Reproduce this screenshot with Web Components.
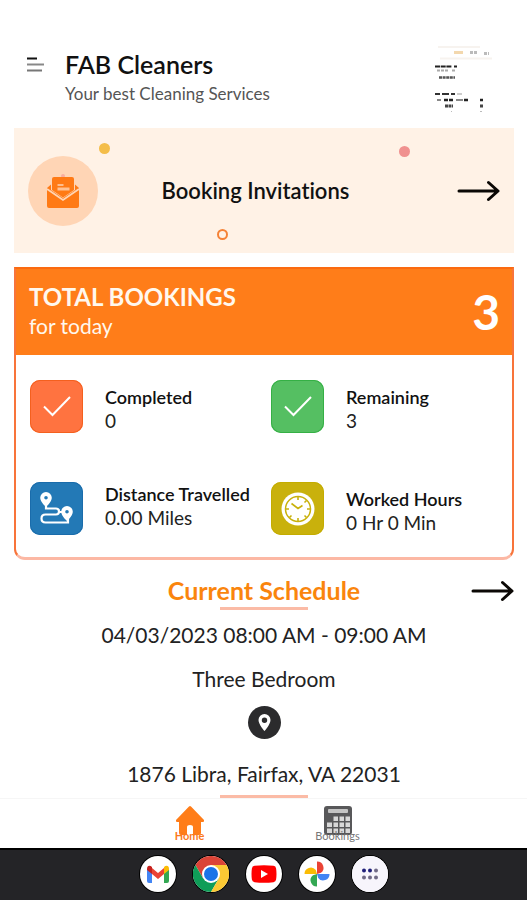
<!DOCTYPE html>
<html lang="en">
<head>
<meta charset="utf-8">
<meta name="viewport" content="width=device-width, initial-scale=1">
<title>FAB Cleaners</title>
<style>
  html { height: 100%; }
  body { margin: 0; min-height: 100%; display: flex; flex-direction: column; background: #fff; color: #111; font-family: Lato, "Open Sans", sans-serif; font-variant-ligatures: none; }
  main { flex: 1; display: flex; flex-direction: column; gap: 14px; padding: 0 13px 0 14px; }
</style>
</head>
<body>
<app-header heading="FAB Cleaners" tagline="Your best Cleaning Services"></app-header>
<main>
  <invite-banner>Booking Invitations</invite-banner>
  <booking-summary heading="TOTAL BOOKINGS" period="for today" total="3">
    <stat-item label="Completed" value="0" style="--tile:#ff7340;--edge:#f4601e">
      <svg width="53" height="53" viewBox="0 0 53 53" fill="none" stroke="#fff" stroke-width="2"><path d="M14 26.500l8.500 8.500L40 17"/></svg>
    </stat-item>
    <stat-item label="Remaining" value="3" style="--tile:#55bf62;--edge:#35b045">
      <svg width="53" height="53" viewBox="0 0 53 53" fill="none" stroke="#fff" stroke-width="2"><path d="M14 26.500l8.500 8.500L40 17"/></svg>
    </stat-item>
    <stat-item class="top" label="Distance Travelled" value="0.00 Miles" style="--tile:#2379b6;--edge:#1a6cab">
      <svg width="53" height="53" viewBox="0 0 53 53"><path d="M16 24v2.500H26q3 0 3 3t-3 3H15.500q-4 0-4 4t4 4H38v-4M29 30h4" fill="none" stroke="#fff" stroke-width="2.200"/><path fill="#fff" fill-rule="evenodd" d="M16 10a5.800 5.800 0 0 1 5.800 5.800C21.800 20 16 25 16 25s-5.800-5-5.800-9.200A5.800 5.800 0 0 1 16 10zm0 4a1.800 1.800 0 1 0 0 3.600 1.800 1.800 0 0 0 0-3.600zM37 24a5.800 5.800 0 0 1 5.800 5.800C42.800 34 37 39 37 39s-5.800-5-5.800-9.200A5.800 5.800 0 0 1 37 24zm0 4a1.800 1.800 0 1 0 0 3.600 1.800 1.800 0 0 0 0-3.600z"/></svg>
    </stat-item>
    <stat-item label="Worked Hours" value="0 Hr 0 Min" style="--tile:#c9b10c;--edge:#c4ac00">
      <svg width="53" height="53" viewBox="0 0 53 53"><circle cx="27" cy="27" r="16.500" fill="#fff"/><circle cx="27" cy="27" r="12.500" fill="none" stroke="#c9b10c" stroke-width="1.500"/><path d="M20.500 21.500l6.500 5 4.500-3M27 15v3M27 36v3M15 27h3M36 27h3M18.500 35.500l2-2M35.500 35.500l-2-2M35.500 18.500l-2 2" fill="none" stroke="#c9b10c" stroke-width="1.600"/></svg>
    </stat-item>
  </booking-summary>
  <current-schedule heading="Current Schedule">
    <p>04/03/2023 08:00 AM - 09:00 AM</p>
    <p>Three Bedroom</p>
    <p slot="address">1876 Libra, Fairfax, VA 22031</p>
  </current-schedule>
</main>
<tab-bar></tab-bar>
<app-dock></app-dock>

<script>
const define = (name, css, html) => customElements.define(name, class extends HTMLElement {
  connectedCallback() {
    if (this.shadowRoot) return;
    const markup = html.replace(/\{(\w+)\}/g, (_, key) => this.getAttribute(key) ?? '');
    this.attachShadow({ mode: 'open' }).innerHTML = `<style>:host,*{box-sizing:border-box}h1,h2,p,dl,dt,dd{margin:0}svg,::slotted(svg){display:block}a,button{color:inherit;font:inherit;text-decoration:none}button{border:0;padding:0;background:none;cursor:pointer}${css}</style>${markup}`;
  }
});

define('arrow-icon', `:host{display:block;flex:none}`,
  `<svg width="43" height="22" viewBox="0 0 43 22" fill="none" stroke="#0b0805" stroke-width="3" stroke-linecap="round" stroke-linejoin="round"><path d="M2 11h38M31.500 2.500L41 11l-9.500 8.500"/></svg>`);

define('app-header', `
  :host{display:flex;align-items:flex-start;padding:45px 33px 13px 27px}
  button{margin:12px 21px 0 0;flex:none}
  .titles{flex:1}
  h1{font-size:25px;line-height:38px;font-weight:600}
  p{font-size:17px;line-height:22px;color:#555}`, `
  <button aria-label="Menu"><svg width="17" height="16" viewBox="0 0 17 16"><path d="M0 1.500h10" stroke="#111" stroke-width="2"/><path d="M0 7.500h17" stroke="#888" stroke-width="2"/><path d="M0 13.500h15" stroke="#777" stroke-width="2"/></svg></button>
  <div class="titles"><h1>{heading}</h1><p>{tagline}</p></div>
  <svg width="64" height="70" viewBox="430 45 64 70" aria-hidden="true">
    <defs><filter id="soft"><feGaussianBlur stdDeviation=".6"/></filter></defs>
    <g filter="url(#soft)" fill="none" stroke="#222">
      <path d="M438 47h42M440 58.500h52" stroke="#f7f3ef" stroke-width="2"/>
      <path d="M454 52.500h9" stroke="#f3d8ae" stroke-width="3"/>
      <path d="M470 52.500h8M484 53.500h5" stroke="#bbb" stroke-width="3" stroke-dasharray="3 1"/>
      <path d="M435 66.500h17M454 66.500h3" stroke-width="2.200" stroke-dasharray="5 .7"/>
      <path d="M437 70.500h11M452 70.500h3" stroke="#aaa" stroke-width="2" stroke-dasharray="3 1"/>
      <path d="M439 77.500h16" stroke="#555" stroke-width="2.500" stroke-dasharray="3 .6"/>
      <path d="M435 94h5M442 94h7M451 94h4" stroke="#333" stroke-width="2"/><path d="M457 94h5" stroke="#ccc" stroke-width="2"/>
      <path d="M437 100h4M456 100h7" stroke="#888" stroke-width="2"/><path d="M444 100h9M464 100h5M480 100h3" stroke-width="2.500" stroke-dasharray="4 1"/>
      <path d="M445 106h8M480 106h3" stroke="#444" stroke-width="3" stroke-dasharray="3 .5"/>
      <path d="M480 111.500h2M451 111.500h1" stroke="#bbb"/>
    </g>
  </svg>`);

define('invite-banner', `
  :host{display:block}
  a{position:relative;display:grid;grid-template-columns:70px 1fr 43px;align-items:center;height:125px;padding:0 14px;background:#fff2e6;isolation:isolate}
  .badge{display:grid;place-items:center;width:70px;height:70px;border-radius:50%;background:#ffd5b5}
  .name{text-align:center;font-size:22px;line-height:30px;font-weight:600;padding-right:44px}
  i{position:absolute;z-index:-1;width:11px;height:11px;border-radius:50%}
  .yellow{left:17%;top:15px;background:#f4bd49}
  .pink{left:77%;top:18px;background:#f0918f}
  .ring{left:40.500%;top:101px;border:2px solid #f58236}`, `
  <a href="#invitations">
    <span class="badge"><svg width="34" height="36" viewBox="0 0 34 36"><circle cx="17" cy="3" r="2" fill="#f9ae9f"/><path d="M1 15l4-3.500V17l12 8 12-8v-5.500l4 3.500v18q0 2-2 2H3q-2 0-2-2z" fill="#ff7a15"/><path d="M6 6q0-2 2-2h18q2 0 2 2v11l-11 7.500L6 17z" fill="#ff7a15"/><path d="M1 16l16 11 16-11" fill="none" stroke="#ffd5b5" stroke-width="1.800"/><path d="M11.500 12h6" stroke="#ffd5b5" stroke-width="1.500"/><path d="M11.500 16h12" stroke="#ffc294" stroke-width="3"/></svg></span>
    <span class="name"><slot></slot></span>
    <arrow-icon></arrow-icon>
    <i class="yellow"></i><i class="pink"></i><i class="ring"></i>
  </a>`);

define('booking-summary', `
  :host{display:block;border:2px solid #f8743a;border-top-color:#fb6a10;border-bottom:3px solid #fcb8a4;border-radius:0 0 11px 11px}
  header{display:flex;justify-content:space-between;align-items:flex-end;padding:11px 12px 17px 13px;background:#ff7d19;color:#fff8ee}
  h2{font-size:24px;line-height:33px;font-weight:700}
  p{font-size:21px;line-height:25px}
  .total{font-size:48px;line-height:52px;font-weight:700;color:#fff}
  .stats{display:grid;grid-template-columns:1fr 1fr;row-gap:49px;padding:25px 0 22px 14px}`, `
  <header><div><h2>{heading}</h2><p>{period}</p></div><span class="total">{total}</span></header>
  <div class="stats"><slot></slot></div>`);

define('stat-item', `
  :host{display:flex;gap:22px;align-items:flex-end;white-space:nowrap}
  :host(.top){align-items:flex-start}
  .tile{flex:none;border-radius:10px;background:var(--tile);box-shadow:inset 0 0 0 1px var(--edge)}
  dt{font-size:18px;line-height:24px;font-weight:600}
  dd{font-size:19px;line-height:24px;color:#222}`, `
  <span class="tile"><slot></slot></span><dl><dt>{label}</dt><dd>{value}</dd></dl>`);

define('current-schedule', `
  :host{display:block;text-align:center}
  .head{display:grid;grid-template-columns:43px 1fr 43px;align-items:center}
  h2{grid-column:2;font-size:25px;line-height:33px;font-weight:700;color:#fa850d}
  .rule{width:88px;height:3px;margin:0 auto;background:#fbbba6}
  .lines{display:grid;gap:18px;padding:12px 0 14px}
  ::slotted(p){margin:0;font-size:21px;line-height:26px;color:#222}
  .pin{display:block;margin:0 auto;border-radius:50%}
  .address{padding:22px 0 8px}`, `
  <div class="head"><h2>{heading}</h2><a href="#schedule" aria-label="Open schedule"><arrow-icon></arrow-icon></a></div>
  <div class="rule"></div>
  <div class="lines"><slot></slot></div>
  <button class="pin" aria-label="Show on map"><svg width="33" height="33" viewBox="0 0 33 33"><circle cx="16.500" cy="16.500" r="16.500" fill="#2b2b2d"/><path fill="#fff" fill-rule="evenodd" d="M16.500 8a6 6 0 0 1 6 6c0 4.500-6 11-6 11s-6-6.500-6-11a6 6 0 0 1 6-6zm0 3.500a2.700 2.700 0 1 0 0 5.400 2.700 2.700 0 0 0 0-5.400z"/></svg></button>
  <div class="address"><slot name="address"></slot></div>
  <div class="rule"></div>`);

define('tab-bar', `
  :host{display:block}
  nav{display:grid;grid-template-columns:148px 148px;justify-content:center;border-top:1px solid #f6f6f6;padding:6px 0}
  a{display:flex;flex-direction:column;align-items:center;font-size:11px;line-height:12px;color:#777}
  a span{margin-top:-6px}
  a[aria-current]{color:#fb7a1c;font-weight:700}`, `
  <nav>
    <a href="#home" aria-current="page"><svg width="30" height="31" viewBox="0 0 30 31"><path fill="#ff7d19" d="M14 1.500q1-1 2 0L29 15q.5 2-1 2h-2v11q0 2-2 2h-6v-8q0-2-3-2t-3 2v8H6q-2 0-2-2V17H2q-1.500 0-1-2z"/></svg><span>Home</span></a>
    <a href="#bookings"><svg width="28" height="31" viewBox="0 0 28 31"><rect y="1" width="28" height="29" rx="3" fill="#58585a"/><rect x="4" y="4" width="20" height="4" rx="1" fill="#c4c4c4"/><path fill="#d8d8d8" d="M9.500 11.500H14V16H9.500zM15.500 11.500H20V16h-4.500zM21.500 11.500H26V16h-4.500zM3 17.500h5V22H3zM9.500 17.500H14V22H9.500zM15.500 17.500H20V22h-4.500zM21.500 17.500H26V22h-4.500zM3 23.500h5V28H3zM9.500 23.500H14V28H9.500zM15.500 23.500H20V28h-4.500zM21.500 23.500H26V28h-4.500z"/></svg><span>Bookings</span></a>
  </nav>`);

define('app-dock', `
  :host{display:flex;justify-content:center;gap:17px;padding:6px 0 8px;background:#242427;border-top:2px solid #000}
  button{width:36px;height:36px;border-radius:50%;background:#fff;box-shadow:0 0 0 1px #000}`, `
  <button aria-label="Gmail"><svg width="36" height="36" viewBox="0 0 36 36"><path fill="#4285f4" d="M7 13l5 4v10H9q-2 0-2-2z"/><path fill="#34a853" d="M29 13l-5 4v10h3q2 0 2-2z"/><path fill="#ea4335" d="M12 12l6 5 6-5v6l-6 5-6-5z"/><path fill="#c5221f" d="M7 13c0-4 3-4 5-2v7l-5-4z"/><path fill="#fbbc04" d="M29 13c0-4-3-4-5-2v7l5-4z"/></svg></button>
  <button aria-label="Chrome"><svg width="36" height="36" viewBox="0 0 36 36"><path fill="#db4437" d="M18 18L2.400 9a18 18 0 0 1 31.200 0z"/><path fill="#db4437" d="M2.400 9l7.800 13.500L18 9h15.600z"/><path fill="#0f9d58" d="M2.400 9a18 18 0 0 0 15.600 27l7.800-13.500L18 18l-7.800 4.500z"/><path fill="#fcc934" d="M33.600 9A18 18 0 0 1 18 36l7.800-13.500L18 9z"/><circle cx="18" cy="18" r="9" fill="#fff"/><circle cx="18" cy="18" r="7" fill="#1a73e8"/></svg></button>
  <button aria-label="YouTube"><svg width="36" height="36" viewBox="0 0 36 36"><path fill="#f00" d="M8.500 9.800q9.500-1.200 19 0 2.300.3 2.600 2.700.8 5.500 0 11-.3 2.400-2.600 2.700-9.500 1.200-19 0-2.300-.3-2.600-2.700-.8-5.500 0-11 .3-2.400 2.600-2.700z"/><path fill="#fff" d="M15 14l7 4-7 4z"/></svg></button>
  <button aria-label="Photos"><svg width="36" height="36" viewBox="0 0 36 36"><path fill="#ea4335" d="M18 5.500a6.300 6.300 0 0 1 4 11.300L18 18z"/><path fill="#4285f4" d="M30.500 18a6.300 6.300 0 0 1-11.300 4L18 18z"/><path fill="#34a853" d="M18 30.500a6.300 6.300 0 0 1-4-11.300l4-1.200z"/><path fill="#fbbc04" d="M5.500 18a6.300 6.300 0 0 1 11.300-4L18 18z"/></svg></button>
  <button aria-label="All apps"><svg width="36" height="36" viewBox="0 0 36 36"><circle cx="18" cy="18" r="18" fill="#f7f5fc"/><g fill="#20207a"><circle cx="12" cy="14.500" r="2"/><circle cx="18" cy="14.500" r="2"/></g><g fill="#716b87"><circle cx="24" cy="14.500" r="2"/><circle cx="12" cy="21.500" r="2"/><circle cx="18" cy="21.500" r="2"/><circle cx="24" cy="21.500" r="2"/></g></svg></button>`);
</script>
</body>
</html>
